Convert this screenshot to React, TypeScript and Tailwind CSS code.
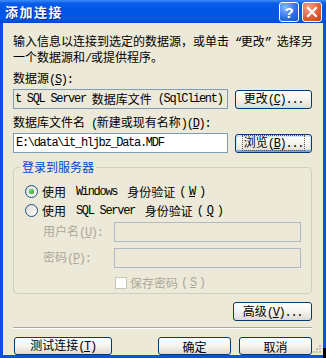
import clsx from "clsx";

// '&x' underlines x, ascii runs get a narrow mono font (like SimSun half-width)
function Txt({ s }: { s: string }) {
  const runs: { t: string; mono: boolean; u: boolean }[] = [];
  for (let i = 0; i < s.length; i++) {
    let ch = s[i];
    let u = false;
    if (ch === "&" && i + 1 < s.length) {
      i++;
      ch = s[i];
      u = true;
    }
    const mono = ch.charCodeAt(0) < 128 || ch === "“" || ch === "”";
    const last = runs[runs.length - 1];
    if (last && !u && !last.u && last.mono === mono) last.t += ch;
    else runs.push({ t: ch, mono, u });
  }
  return (
    <>
      {runs.map((r, i) => (
        <span
          key={i}
          className={clsx(
            r.mono && "font-['Liberation_Mono',monospace] tracking-[-1.3px]",
            r.u && "underline underline-offset-[1px]"
          )}
        >
          {r.t}
        </span>
      ))}
    </>
  );
}

function Btn({ s, w, focus, h = "h-[19px]" }: any) {
  return (
    <div
      className={clsx(
        "flex items-center justify-center shrink-0 rounded-[3px] border border-[#003C74] bg-gradient-to-b from-white via-[#F4F3EE] to-[#DEDBD0] whitespace-pre",
        w,
        h,
        focus && "shadow-[inset_0_1px_0_1px_#CEE7FF,inset_0_-1px_0_1px_#7DA2E6]"
      )}
    >
      <span className={clsx("px-[1px] leading-[11px]", focus && "outline outline-1 outline-dotted outline-[#555]")}>
        <Txt s={s} />
      </span>
    </div>
  );
}

function Radio({ checked }: { checked?: boolean }) {
  return (
    <div className="w-[13px] h-[13px] shrink-0 rounded-full border border-[#1C5180] bg-gradient-to-br from-[#DCDBD5] to-white flex items-center justify-center">
      {checked && <div className="w-[5px] h-[5px] rounded-full bg-[radial-gradient(circle_at_35%_35%,#5FE05B,#1E9A1E)]" />}
    </div>
  );
}

function TitleBar() {
  return (
    <div className="h-[23px] shrink-0 flex items-start pl-[5px] pr-[4px] bg-[linear-gradient(to_bottom,#3C8CF8_0%,#0A5BE9_15%,#0055E5_50%,#0058EA_85%,#0046D2_100%)]">
      <div className="mt-[4px] text-white font-bold text-[13px] leading-[15px] tracking-[1.5px] [text-shadow:1px_1px_0_#0A1F8C]">
        添加连接
      </div>
      <div className="ml-auto mt-[2px] flex gap-[3px]">
        <div className="w-[20px] h-[20px] rounded-[3px] border border-white bg-[radial-gradient(circle_at_30%_25%,#8CB8FF,#2D6BEA_60%,#1B4FD0)] flex items-center justify-center text-white font-bold text-[15px] leading-[15px] font-['Liberation_Sans',sans-serif]">
          ?
        </div>
        <div className="w-[20px] h-[20px] rounded-[3px] border border-white bg-[radial-gradient(circle_at_30%_25%,#F2A48A,#E05A33_60%,#C43F18)] flex items-center justify-center">
          <svg width="12" height="12" viewBox="0 0 12 12">
            <path d="M2 2 L10 10 M10 2 L2 10" stroke="white" strokeWidth="2.2" strokeLinecap="square" />
          </svg>
        </div>
      </div>
    </div>
  );
}

export default function App() {
  return (
    <div className="relative w-[326px] h-[358px] flex flex-col overflow-hidden font-['Noto_Sans_CJK_SC',sans-serif] text-[12px] leading-[12px] text-black select-none whitespace-pre">
      <TitleBar />
      <div className="relative flex-1 flex flex-col bg-[#ECE9D8] border-x-[3px] border-b-[3px] border-[#0A53DC] pl-[10px] pr-[11px] pt-[11px]">
        <p className="leading-[13px]">
          <Txt s="输入信息以连接到选定的数据源，或单击 “更改” 选择另" />
          <br />
          <Txt s="一个数据源和/或提供程序。" />
        </p>

        <div className="mt-[6px]">
          <Txt s="数据源(&S):" />
        </div>
        <div className="mt-[3px] flex items-center gap-[7px]">
          <div className="w-[215px] h-[20px] border border-[#7F9DB9] bg-[#ECE9D8] flex items-center pl-[1px] overflow-hidden">
            <Txt s="t SQL Server 数据库文件 (SqlClient)" />
          </div>
          <Btn s="更改(&C)..." w="w-[77px]" />
        </div>

        <div className="mt-[7px]">
          <Txt s="数据库文件名 (新建或现有名称)(&D):" />
        </div>
        <div className="mt-[3px] flex items-center gap-[7px]">
          <div className="w-[215px] h-[20px] border border-[#7F9DB9] bg-white flex items-center pl-[2px] overflow-hidden">
            <Txt s={"E:\\data\\it_hljbz_Data.MDF"} />
          </div>
          <Btn s="浏览(&B)..." w="w-[77px]" focus />
        </div>

        <fieldset className="mt-[8px] border border-[#D0D0BF] rounded-[4px] pb-[4px]">
          <legend className="ml-[6px] px-[2px] text-[#0046D5]">登录到服务器</legend>
          <div className="pl-[11px] pr-[10px] flex flex-col">
            <div className="mt-[12px] h-[13px] flex items-center gap-[4px]">
              <Radio checked />
              <Txt s="使用 Windows 身份验证(&W)" />
            </div>
            <div className="mt-[6px] h-[13px] flex items-center gap-[4px]">
              <Radio />
              <Txt s="使用 SQL Server 身份验证(&Q)" />
            </div>
            <div className="mt-[5px] h-[20px] flex items-center pl-[18px] text-[#ACA899]">
              <div className="w-[71px]">
                <Txt s="用户名(&U):" />
              </div>
              <div className="flex-1 h-[20px] border border-[#B0BAC6] bg-[#ECE9D8]" />
            </div>
            <div className="mt-[6px] h-[20px] flex items-center pl-[18px] text-[#ACA899]">
              <div className="w-[71px]">
                <Txt s="密码(&P):" />
              </div>
              <div className="flex-1 h-[20px] border border-[#B0BAC6] bg-[#ECE9D8]" />
            </div>
            <div className="mt-[8px] h-[13px] flex items-center gap-[3px] pl-[90px] text-[#ACA899]">
              <div className="w-[12px] h-[12px] border border-[#CAC8BB] bg-white" />
              <Txt s="保存密码(&S)" />
            </div>
          </div>
        </fieldset>

        <div className="mt-[8px] flex justify-end">
          <Btn s="高级(&V)..." w="w-[79px]" />
        </div>

        <div className="mt-[6px] h-[2px] border-t border-[#ACA899] border-b border-b-white" />

        <div className="mt-[8px] flex items-center">
          <div className="ml-[1px]">
            <Btn s="测试连接(&T)" w="w-[98px]" h="h-[18px]" />
          </div>
          <div className="ml-auto flex gap-[8px]">
            <Btn s="确定" w="w-[73px]" h="h-[18px]" />
            <Btn s="取消" w="w-[73px]" h="h-[18px]" />
          </div>
        </div>

        <svg className="absolute right-[1px] bottom-[1px]" width="10" height="10" viewBox="0 0 10 10">
          <rect x="7" y="1" width="2" height="2" fill="#C4C1B0" />
          <rect x="4" y="4" width="2" height="2" fill="#C4C1B0" />
          <rect x="7" y="4" width="2" height="2" fill="#C4C1B0" />
          <rect x="1" y="7" width="2" height="2" fill="#C4C1B0" />
          <rect x="4" y="7" width="2" height="2" fill="#C4C1B0" />
          <rect x="7" y="7" width="2" height="2" fill="#C4C1B0" />
        </svg>
      </div>
      <div className="absolute right-0 bottom-0 w-[3px] h-[10px] bg-black" />
    </div>
  );
}
